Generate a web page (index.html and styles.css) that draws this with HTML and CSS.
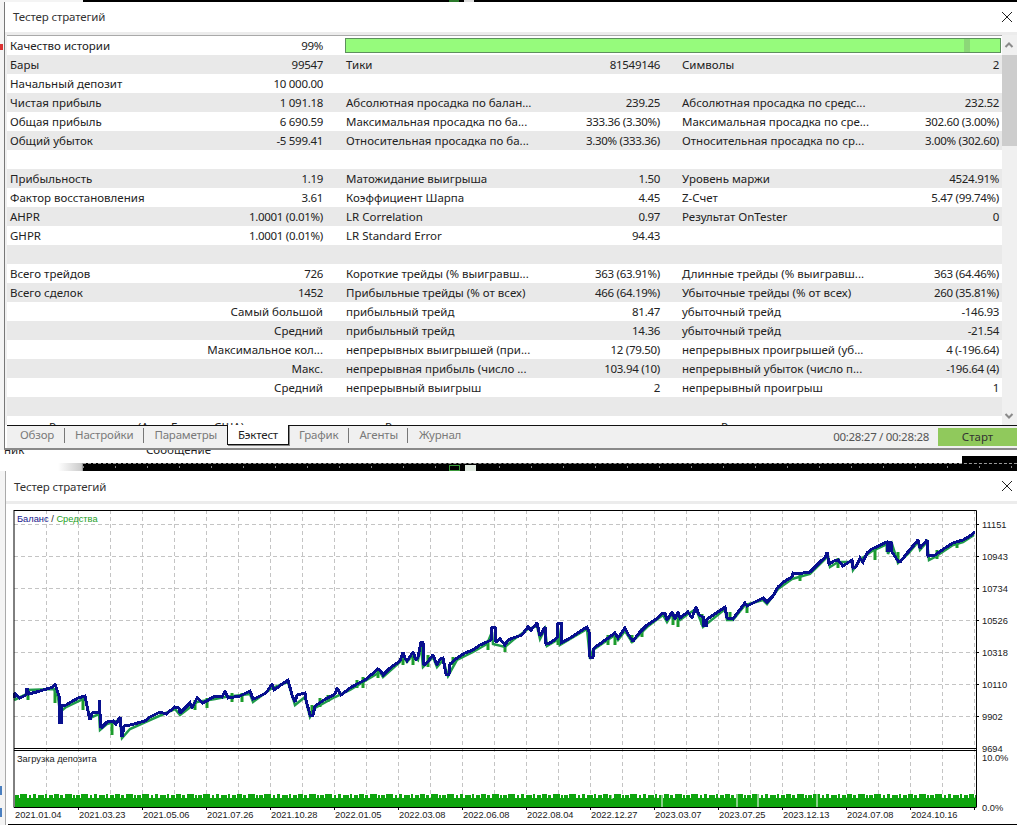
FILE: index.html
```html
<!DOCTYPE html>
<html lang="ru">
<head>
<meta charset="utf-8">
<title>Тестер стратегий</title>
<link rel="stylesheet" href="styles.css">
</head>
<body>
<div class="page">
  <div class="topstrip"><i class="mini m1"></i><i class="mini m2"></i></div>
  <section class="win win1">
    <header class="title"><span>Тестер стратегий</span>
      <svg class="close" width="12" height="12" viewBox="0 0 12 12"><path d="M1 1L11 11M11 1L1 11"/></svg>
    </header>
    <div class="body">
      <div class="table">
        <div class="row"><div class="c"><span>Качество истории</span><span>99%</span></div><div class="bar"><i></i></div></div>
        <div class="row"><div class="c"><span>Бары</span><span>99547</span></div><div class="c"><span>Тики</span><span>81549146</span></div><div class="c"><span>Символы</span><span>2</span></div></div>
        <div class="row"><div class="c"><span>Начальный депозит</span><span>10 000.00</span></div></div>
        <div class="row"><div class="c"><span>Чистая прибыль</span><span>1 091.18</span></div><div class="c"><span>Абсолютная просадка по балан...</span><span>239.25</span></div><div class="c"><span>Абсолютная просадка по средс...</span><span>232.52</span></div></div>
        <div class="row"><div class="c"><span>Общая прибыль</span><span>6 690.59</span></div><div class="c"><span>Максимальная просадка по ба...</span><span>333.36 (3.30%)</span></div><div class="c"><span>Максимальная просадка по сре...</span><span>302.60 (3.00%)</span></div></div>
        <div class="row"><div class="c"><span>Общий убыток</span><span>-5 599.41</span></div><div class="c"><span>Относительная просадка по ба...</span><span>3.30% (333.36)</span></div><div class="c"><span>Относительная просадка по ср...</span><span>3.00% (302.60)</span></div></div>
        <div class="row"></div>
        <div class="row"><div class="c"><span>Прибыльность</span><span>1.19</span></div><div class="c"><span>Матожидание выигрыша</span><span>1.50</span></div><div class="c"><span>Уровень маржи</span><span>4524.91%</span></div></div>
        <div class="row"><div class="c"><span>Фактор восстановления</span><span>3.61</span></div><div class="c"><span>Коэффициент Шарпа</span><span>4.45</span></div><div class="c"><span>Z-Счет</span><span>5.47 (99.74%)</span></div></div>
        <div class="row"><div class="c"><span>AHPR</span><span>1.0001 (0.01%)</span></div><div class="c"><span>LR Correlation</span><span>0.97</span></div><div class="c"><span>Результат OnTester</span><span>0</span></div></div>
        <div class="row"><div class="c"><span>GHPR</span><span>1.0001 (0.01%)</span></div><div class="c"><span>LR Standard Error</span><span>94.43</span></div></div>
        <div class="row"></div>
        <div class="row"><div class="c"><span>Всего трейдов</span><span>726</span></div><div class="c"><span>Короткие трейды (% выигравш...</span><span>363 (63.91%)</span></div><div class="c"><span>Длинные трейды (% выигравш...</span><span>363 (64.46%)</span></div></div>
        <div class="row"><div class="c"><span>Всего сделок</span><span>1452</span></div><div class="c"><span>Прибыльные трейды (% от всех)</span><span>466 (64.19%)</span></div><div class="c"><span>Убыточные трейды (% от всех)</span><span>260 (35.81%)</span></div></div>
        <div class="row"><div class="c end"><span>Самый большой</span></div><div class="c"><span>прибыльный трейд</span><span>81.47</span></div><div class="c"><span>убыточный трейд</span><span>-146.93</span></div></div>
        <div class="row"><div class="c end"><span>Средний</span></div><div class="c"><span>прибыльный трейд</span><span>14.36</span></div><div class="c"><span>убыточный трейд</span><span>-21.54</span></div></div>
        <div class="row"><div class="c end"><span>Максимальное кол...</span></div><div class="c"><span>непрерывных выигрышей (при...</span><span>12 (79.50)</span></div><div class="c"><span>непрерывных проигрышей (уб...</span><span>4 (-196.64)</span></div></div>
        <div class="row"><div class="c end"><span>Макс.</span></div><div class="c"><span>непрерывная прибыль (число ...</span><span>103.94 (10)</span></div><div class="c"><span>непрерывный убыток (число п...</span><span>-196.64 (4)</span></div></div>
        <div class="row"><div class="c end"><span>Средний</span></div><div class="c"><span>непрерывный выигрыш</span><span>2</span></div><div class="c"><span>непрерывный проигрыш</span><span>1</span></div></div>
        <div class="row"></div>
        <div class="row"><div class="c head"><span>Распределение (Азия Европа США)</span></div><div class="c head"><span>Распределение</span></div><div class="c head"><span>Распределение</span></div></div>
      </div>
      <div class="scroll">
        <svg class="arrow" width="14" height="20" viewBox="0 0 14 20"><path d="M3.500 12L7 8.500L10.500 12"/></svg>
        <div class="thumb"></div>
        <div class="fill"></div>
        <svg class="arrow" width="14" height="18" viewBox="0 0 14 18"><path d="M3.500 7L7 10.500L10.500 7"/></svg>
      </div>
    </div>
    <nav class="tabs">
      <span class="tab sep">Обзор</span>
      <span class="tab sep">Настройки</span>
      <span class="tab">Параметры</span>
      <span class="tab active">Бэктест</span>
      <span class="tab sep">График</span>
      <span class="tab sep">Агенты</span>
      <span class="tab">Журнал</span>
      <span class="timer">00:28:27 / 00:28:28</span>
      <span class="start">Старт</span>
    </nav>
  </section>
  <div class="between">
    <div class="under"><span class="u1">ник</span><span class="u2">Сообщение</span><i class="ublack"></i></div>
    <div class="strip"><i class="fade"></i><div class="black"><i class="box b1"></i><i class="box b2"></i></div></div>
  </div>
  <section class="win win2">
    <header class="title"><span>Тестер стратегий</span>
      <svg class="close" width="12" height="12" viewBox="0 0 12 12"><path d="M1 1L11 11M11 1L1 11"/></svg>
    </header>
    <div class="plot">
    <svg class="chart" width="1011" height="321" viewBox="6 504 1011 321">
      <defs>
        <pattern id="comb" x="15" y="793" width="61" height="6" patternUnits="userSpaceOnUse">
          <path d="M0 2h4v4H0zM5 1h7v5H5zM14 2h2v4h-2zM18 1h3v5h-3zM23 2h6v4h-6zM30 1h2v5h-2zM34 2h4v4h-4zM39 1h5v5h-5zM45 2h3v4h-3zM50 1h7v5h-7zM58 2h2v4h-2z"/>
        </pattern>
      </defs>
      <path class="grid" d="M46.500 510V807M78.500 510V807M110.500 510V807M142.500 510V807M174.500 510V807M206.500 510V807M238.500 510V807M270.500 510V807M302.500 510V807M334.500 510V807M366.500 510V807M398.500 510V807M430.500 510V807M462.500 510V807M494.500 510V807M526.500 510V807M558.500 510V807M590.500 510V807M622.500 510V807M654.500 510V807M686.500 510V807M718.500 510V807M750.500 510V807M782.500 510V807M814.500 510V807M846.500 510V807M878.500 510V807M910.500 510V807M942.500 510V807M974.500 510V807M14 524.500H976M14 556.500H976M14 588.500H976M14 620.500H976M14 652.500H976M14 684.500H976M14 716.500H976"/>
      <rect class="load" x="15" y="798" width="961" height="9"/>
      <rect class="comb" x="15" y="793" width="961" height="6"/>
      <path class="notch" d="M612 794v5M662 794v13M737 794v13M758 794v13M817 794v13"/>
      <path class="spikes" d="M28 690V700M55 690V703M83 698V710M112 720V735M195 700V710M207 698V708M232 693V702M242 693V702M312 705V717M320 698V707M328 695V702M357 680V688M363 677V688M378 670V678M403 655V665M413 655V665M428 655V667M453 657V665M488 640V650M505 642V652M558 635V645M608 635V645M615 633V645M632 635V643M642 628V637M673 613V625M678 615V627M702 614V625M730 612V620M747 603V613M800 575V581M838 558V568M875 550V560M887 544V552M898 552V560M937 550V559M957 542V548"/>
      <polyline class="equity" points="14,700 27,694 28,690 54,689 58,697 60,712 66,707 85,698 90,718 99,714 100,730 107,724 120,720 122,738 130,729 150,720 175,709 180,715 197,702 215,699 225,697 250,694 253,702 272,688 288,682 295,705 305,697 310,717 315,708 335,697 350,690 380,672 383,677 400,662 403,656 407,662 413,655 418,660 421,646 423,667 433,657 437,667 443,660 448,676 457,660 473,652 487,644 492,632 493,644 505,647 513,640 528,629 537,626 540,639 545,629 547,646 557,640 558,628 560,645 587,629 590,659 593,650 615,635 618,640 625,631 632,642 640,634 647,627 663,615 667,622 672,614 680,620 688,614 696,609 703,627 725,609 727,620 733,620 745,605 763,600 767,604 778,589 792,579 810,574 822,562 828,556 830,567 838,562 852,562 853,570 860,560 872,551 887,544 888,554 892,544 898,563 908,554 918,542 920,550 927,542 929,560 935,557 953,545 963,542 974,535"/>
      <polyline class="balance" points="14,698 14,693 20,698 26,695 27,688 29,694 40,691 53,687 55,684 57,690 59,696 59,722 61,722 61,706 66,705 78,698 85,696 87,706 90,720 92,713 99,712 99,700 101,728 107,722 113,721 116,724 120,717 122,737 124,726 130,725 145,721 150,717 160,712 166,714 175,707 179,708 180,713 190,703 192,708 197,698 203,703 215,696 222,697 225,691 228,698 240,696 250,691 253,699 256,698 266,693 272,684 274,690 288,680 292,695 295,702 297,695 305,693 306,700 310,715 313,715 315,706 324,700 335,694 337,688 341,695 350,688 357,684 365,680 378,669 380,670 383,675 390,668 400,661 403,652 405,658 407,661 413,652 416,660 418,657 421,642 423,642 424,665 427,663 433,655 437,665 440,659 443,658 446,674 449,674 450,664 457,658 465,653 473,650 480,645 487,642 491,640 492,627 495,627 496,642 500,639 505,645 508,640 513,638 522,635 528,627 531,630 537,623 540,636 545,627 546,644 550,643 557,638 558,623 561,623 561,643 570,638 587,627 589,632 590,657 593,657 594,648 604,641 615,633 618,638 625,628 628,634 632,640 634,640 636,637 640,632 647,625 655,620 663,613 665,613 667,620 672,612 675,619 678,612 680,618 688,612 692,618 696,607 699,615 703,617 703,625 706,625 706,620 725,607 727,618 733,619 745,603 747,606 763,598 767,602 773,596 778,587 785,581 792,577 793,573 796,574 810,572 812,570 822,560 825,558 827,552 829,564 834,561 838,560 843,566 852,560 853,568 856,567 860,558 863,562 867,553 872,549 887,542 888,552 889,542 891,542 892,552 898,561 901,561 908,552 918,540 920,548 927,540 928,556 935,555 945,548 953,543 963,540 970,536 975,532"/>
      <path class="axis" d="M14 510.500H976.500V807M14 510V807.500H976.500M14 748.500H976.500M14 750.500H976.500M976 524.500h3M976 556.500h3M976 588.500h3M976 620.500h3M976 652.500h3M976 684.500h3M976 716.500h3M78.500 807v3M142.500 807v3M206.500 807v3M270.500 807v3M334.500 807v3M398.500 807v3M462.500 807v3M526.500 807v3M590.500 807v3M654.500 807v3M718.500 807v3M782.500 807v3M846.500 807v3M910.500 807v3M974.500 807v3M8 824.500H1017"/>
      <text class="t" x="17" y="522"><tspan class="tb">Баланс</tspan> / <tspan class="tg">Средства</tspan></text>
      <text class="t" x="17" y="762">Загрузка депозита</text>
      <g class="t">
        <text x="982" y="528">11151</text><text x="982" y="560">10943</text><text x="982" y="592">10734</text><text x="982" y="624">10526</text><text x="982" y="656">10318</text><text x="982" y="688">10110</text><text x="982" y="720">9902</text><text x="982" y="752">9694</text><text x="982" y="761">10.0%</text><text x="982" y="811">0.0%</text>
        <text x="15" y="818">2021.01.04</text><text x="79" y="818">2021.03.23</text><text x="143" y="818">2021.05.06</text><text x="207" y="818">2021.07.26</text><text x="271" y="818">2021.10.28</text><text x="335" y="818">2022.01.05</text><text x="399" y="818">2022.03.08</text><text x="463" y="818">2022.06.08</text><text x="527" y="818">2022.08.04</text><text x="591" y="818">2022.12.27</text><text x="655" y="818">2023.03.07</text><text x="719" y="818">2023.07.25</text><text x="783" y="818">2023.12.13</text><text x="847" y="818">2024.07.08</text><text x="911" y="818">2024.10.16</text>
      </g>
    </svg>
    </div>
  </section>
  <i class="edge e1"></i><i class="edge e2"></i><i class="edge e3"></i>
</div>
</body>
</html>
```

FILE: styles.css
```css
* { box-sizing: border-box; }
html, body { margin: 0; padding: 0; }
body { background: #f4f4f4; overflow: hidden; }
.page {
  position: relative;
  width: 1017px;
  height: 825px;
  overflow: hidden;
  font-family: "Noto Sans", "Open Sans", sans-serif;
  font-size: 11.500px;
  color: #222;
}
.topstrip {
  position: relative;
  height: 2px;
  margin-left: 83px;
  background: #000;
}
.mini { position: absolute; top: 0; height: 2px; width: 10px; }
.m1 { left: 366px; background: #2c7a2c; }
.m2 { left: 381px; background: #ddd; }

.win { background: #fff; border-left: 1px solid #777; }
.win1 { margin-left: 4px; height: 448px; border-bottom: 2px solid #8a8a8a; display: flex; flex-direction: column; }
.win2 { margin-left: 5px; height: 354px; border-left-color: #aaa; }

.title {
  height: 30px;
  padding: 0 4px 0 8px;
  display: flex;
  align-items: center;
  justify-content: space-between;
  letter-spacing: -0.150px;
  color: #333;
  background: #fff;
}
.win1 .title { padding-bottom: 1px; }
.close { fill: none; stroke: #222; stroke-width: 1; }

.body {
  display: flex;
  height: 393px;
  border-top: 3px solid #ececec;
  padding-left: 2px;
  background: #f0f0f0;
}
.table { width: 996px; height: 390px; overflow: hidden; background: #fff; border-top: 1px solid #a9a9a9; }
.row {
  display: grid;
  grid-template-columns: 336px 336px 321px;
  height: 19px;
  padding-left: 3px;
  line-height: 19px;
  white-space: nowrap;
}
.row:nth-child(even) { background: #e9e9e9; }
.c { display: flex; justify-content: space-between; padding-right: 23px; }
.c:nth-child(2) { padding-right: 22px; }
.c:nth-child(3) { padding-right: 4px; }
.c.end { justify-content: flex-end; }
.c span:nth-child(2) { letter-spacing: -0.300px; }
.c.head { padding-left: 39px; padding-top: 1px; }
.bar {
  grid-column: 2 / 4;
  position: relative;
  margin: 2px 2px 2px -1px;
  background: #96fb7c;
  border: 1px solid #5e8f5e;
}
.bar i { position: absolute; right: 30px; top: 0; bottom: 0; width: 6px; background: #8cd878; }

.scroll { width: 15px; height: 390px; background: #f0f0f0; display: flex; flex-direction: column; }
.thumb { height: 91px; background: #cdcdcd; }
.fill { flex: 1; }
.arrow { display: block; fill: none; stroke: #8a8a8a; stroke-width: 2; }

.tabs {
  margin-left: 2px;
  height: 23px;
  display: flex;
  align-items: flex-start;
  background: #f0f0f0;
  border-top: 1px solid #111;
  color: #7a7a7a;
  white-space: nowrap;
  padding-left: 3px;
  line-height: 18px;
}
.tab { padding: 0 10.500px; height: 19px; letter-spacing: -0.200px; }
.tab:first-child { padding-left: 10px; }
.tab.sep { position: relative; }
.tab.sep::after {
  content: "";
  position: absolute;
  right: 0;
  top: 2px;
  height: 15px;
  border-right: 1px solid #777;
}
.tab.active {
  height: 20px;
  margin-top: -1px;
  padding: 1px 9.500px 0;
  background: #fff;
  color: #222;
  border: solid #111;
  border-width: 0 1px 1px;
  box-shadow: 1px 1px 0 #888;
}
.timer { margin-left: auto; margin-right: 9px; margin-top: 2px; color: #555; letter-spacing: -0.300px; }
.start {
  width: 79px;
  height: 18px;
  margin-top: 2px;
  background: #90c95c;
  color: #333;
  text-align: center;
}

.between { height: 21px; background: #fff; }
.under { height: 13px; position: relative; overflow: hidden; display: flex; }
.under span { position: absolute; top: -8px; line-height: 16px; color: #222; }
.u1 { left: 4px; }
.u2 { left: 146px; }
.ublack { position: absolute; right: 0; top: 6px; width: 55px; height: 7px; background: #000; }
.strip { height: 8px; display: flex; }
.fade { width: 83px; background: linear-gradient(90deg, #fff 70%, #ccc 98%, #888); }
.black {
  flex: 1;
  position: relative;
  background: repeating-linear-gradient(90deg, #888 0 1px, transparent 1px 32px) 0 2px / 100% 2px no-repeat, #000;
  border-top: 1px dashed #999;
}
.box { position: absolute; top: 1px; width: 11px; height: 6px; }
.b1 { left: 366px; border: 1px solid #3a9a3a; }
.b2 { left: 382px; background: #dfe8df; }

.plot { border-top: 3px solid #ececec; }
.chart { display: block; }
.grid { fill: none; stroke: #c4c4c4; stroke-width: 1; stroke-dasharray: 4 3; }
.load { fill: #0ea40e; }
.comb { fill: url(#comb); }
#comb path { fill: #0ea40e; }
.notch { fill: none; stroke: #fff; stroke-width: 1; }
.spikes { fill: none; stroke: #1c9c2c; stroke-width: 3; }
.equity { fill: none; stroke: #1f9a4a; stroke-width: 2.500; }
.balance { fill: none; stroke: #08108e; stroke-width: 3; stroke-linejoin: miter; stroke-miterlimit: 2; shape-rendering: crispEdges; }
.axis { fill: none; stroke: #000; stroke-width: 1; }
.t { font-family: "Liberation Sans", sans-serif; font-size: 9.300px; fill: #1a1a1a; }
.tb { fill: #14148c; }
.tg { fill: #1ea01e; }

.edge { position: absolute; display: block; }
.e1 { left: 0; top: 44px; width: 3px; height: 6px; background: #d33; }
.e2 { left: 0; top: 786px; width: 2px; height: 9px; background: #4a7fc0; }
.e3 { left: 0; top: 808px; width: 2px; height: 9px; background: #4a7fc0; }
```
